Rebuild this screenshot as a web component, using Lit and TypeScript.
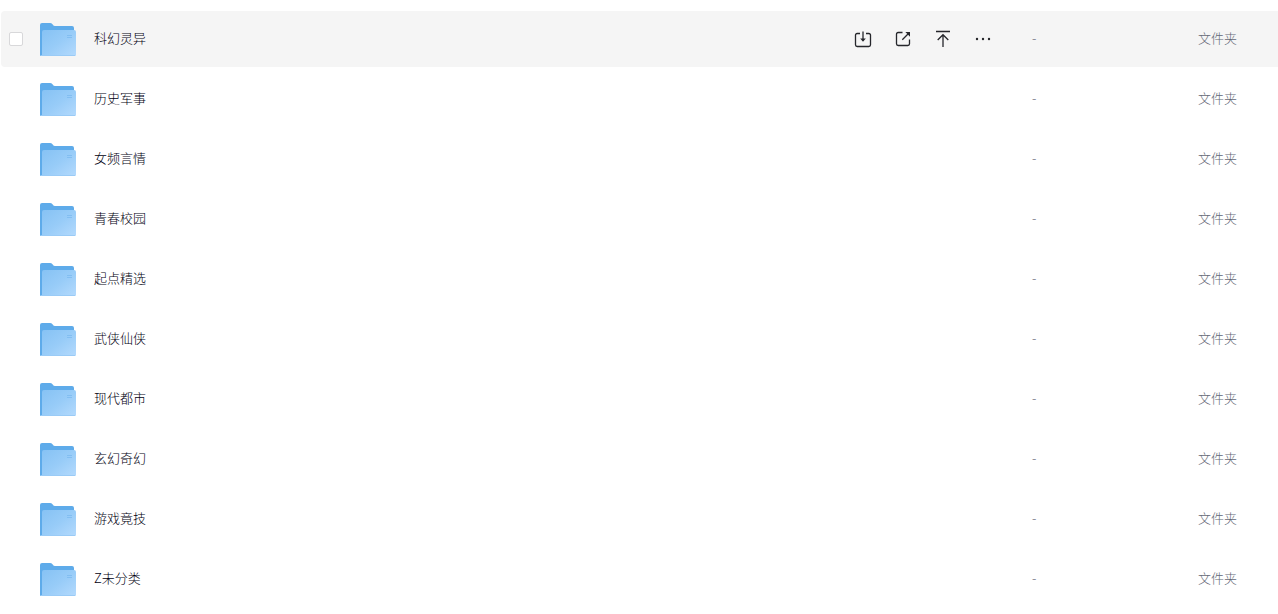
import { LitElement, html, css, svg } from "lit";
import { customElement, property } from "lit/decorators.js";

interface FileEntry {
  name: string;
  size: string;
  kind: string;
}

const folder = (name: string): FileEntry => ({ name, size: "-", kind: "文件夹" });

const entries: FileEntry[] = [
  "科幻灵异",
  "历史军事",
  "女频言情",
  "青春校园",
  "起点精选",
  "武侠仙侠",
  "现代都市",
  "玄幻奇幻",
  "游戏竟技",
  "Z未分类",
].map(folder);

const actions = [
  {
    label: "下载",
    icon: svg`<path d="M6 3.5H3.2Q1.5 3.5 1.5 5V14.8Q1.5 16.5 3.2 16.5H14.8Q16.5 16.5 16.5 14.8V5Q16.5 3.5 14.8 3.5H12M9 1.5V10.5"/><path d="M6.2 8.4H11.8L9 11.8Z" fill="currentColor" stroke="none"/>`,
  },
  {
    label: "分享",
    icon: svg`<path d="M8.5 2.5H4.2Q2.5 2.5 2.5 4.2V13.8Q2.5 15.5 4.2 15.5H13.8Q15.5 15.5 15.5 13.8V9.5M8.3 9.7L14.5 3.5"/><path d="M11.4 2.1H16V6.7Z" fill="currentColor" stroke="none"/>`,
  },
  {
    label: "置顶",
    icon: svg`<path d="M2 1.5H16M9 17V5M3.7 10L9 4.7L14.3 10"/>`,
  },
  {
    label: "更多",
    icon: svg`<g fill="currentColor" stroke="none"><circle cx="3" cy="9" r="1.2"/><circle cx="9" cy="9" r="1.2"/><circle cx="15" cy="9" r="1.2"/></g>`,
  },
];

@customElement("folder-icon")
export class FolderIcon extends LitElement {
  static styles = css`
    :host {
      display: block;
      flex: none;
    }
    .art {
      display: block;
      width: 36px;
      height: 36px;
    }
  `;

  render() {
    return html`
      <svg class="art" viewBox="0 -2 36 36" aria-hidden="true">
        <defs>
          <linearGradient id="front" x1="0" y1="0" x2="1" y2="1">
            <stop offset="0" stop-color="#86c2f4" />
            <stop offset="0.5" stop-color="#98ccf8" />
            <stop offset="1" stop-color="#b4dafd" />
          </linearGradient>
        </defs>
        <path d="M0 2Q0 0 2 0H10Q11.5 0 12.3 1L13.2 2.2Q13.8 3 15 3H32Q34 3 34 5V33H1Q0 33 0 32Z" fill="#5eabea" />
        <path d="M2 9Q2 7 4 7H34Q36 7 36 9V32Q36 33 35 33H2Z" fill="url(#front)" />
        <path d="M1 32.5H35" stroke="#9acbf6" stroke-width="1" />
        <path d="M27 12.5H32M27 14.5H32" stroke="#79b7ee" stroke-width="0.7" />
      </svg>
    `;
  }
}

@customElement("app-root")
export class AppRoot extends LitElement {
  @property({ attribute: false }) items: FileEntry[] = entries;

  static styles = css`
    :host {
      display: block;
      padding: 7px 0 0 1px;
      background: #fff;
      color: #000010;
      font: 13px/20px "Noto Sans CJK SC", "Noto Sans", sans-serif;
      font-weight: 300;
    }
    .files {
      width: 100%;
      table-layout: fixed;
      border-collapse: separate;
      border-spacing: 0 4px;
    }
    .col-check {
      width: 30px;
    }
    .col-size {
      width: 166px;
    }
    .col-kind {
      width: 80px;
    }
    .cell {
      box-sizing: border-box;
      height: 56px;
      padding: 0;
      vertical-align: middle;
    }
    .cell:first-child {
      border-radius: 4px 0 0 4px;
    }
    .active .cell {
      background: #f5f5f5;
    }
    .check {
      appearance: none;
      display: block;
      box-sizing: border-box;
      width: 14px;
      height: 14px;
      margin: 0 0 0 8px;
      border: 1px solid #d8d8da;
      border-radius: 2px;
      background: #fff;
      opacity: 0;
    }
    .active .check,
    .check:checked,
    .check:focus-visible {
      opacity: 1;
    }
    .check:checked {
      background: #06a7ff;
    }
    .name-cell {
      display: flex;
      align-items: center;
      padding-left: 9px;
    }
    .name {
      margin-left: 18px;
      padding-bottom: 2px;
      color: inherit;
      text-decoration: none;
    }
    .actions {
      display: flex;
      gap: 22px;
      margin-left: auto;
      padding-right: 40px;
    }
    .action {
      display: block;
      width: 18px;
      height: 18px;
      padding: 0;
      border: 0;
      background: none;
      color: #25262b;
      cursor: pointer;
    }
    .glyph {
      display: block;
      width: 18px;
      height: 18px;
      fill: none;
      stroke: currentColor;
      stroke-width: 1.3;
    }
    .muted {
      padding-bottom: 2px;
      color: #646876;
    }
  `;

  private renderRow(entry: FileEntry, index: number) {
    const active = index === 0;
    return html`
      <tr class=${active ? "active" : ""}>
        <td class="cell">
          <input class="check" type="checkbox" aria-label=${entry.name} />
        </td>
        <td class="cell">
          <div class="name-cell">
            <folder-icon></folder-icon>
            <a class="name" href="#">${entry.name}</a>
            ${active
              ? html`<div class="actions">
                  ${actions.map(
                    (a) => html`<button class="action" type="button" aria-label=${a.label}>
                      <svg class="glyph" viewBox="0 0 18 18" aria-hidden="true">${a.icon}</svg>
                    </button>`
                  )}
                </div>`
              : null}
          </div>
        </td>
        <td class="cell muted">${entry.size}</td>
        <td class="cell muted">${entry.kind}</td>
      </tr>
    `;
  }

  render() {
    return html`
      <table class="files">
        <colgroup>
          <col class="col-check" />
          <col />
          <col class="col-size" />
          <col class="col-kind" />
        </colgroup>
        <tbody>
          ${this.items.map((entry, i) => this.renderRow(entry, i))}
        </tbody>
      </table>
    `;
  }
}
